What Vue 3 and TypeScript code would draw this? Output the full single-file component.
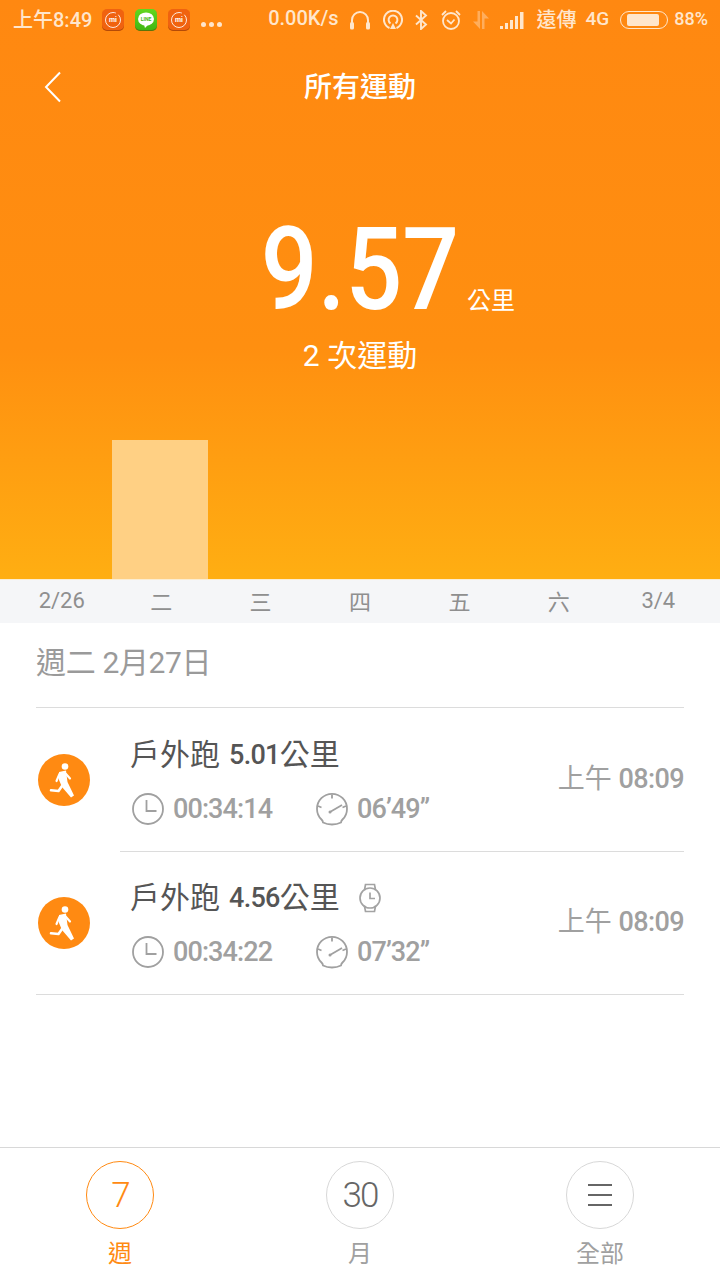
<script setup lang="ts">
import { ref } from "vue"

interface Workout {
  id: number
  name: string
  distance: string
  duration: string
  pace: string
  time: string
  fromWatch: boolean
}

const weekLabels = ["2/26", "二", "三", "四", "五", "六", "3/4"]
const barHeights = [0, 139, 0, 0, 0, 0, 0]

const workouts: Workout[] = [
  { id: 1, name: "戶外跑", distance: "5.01", duration: "00:34:14", pace: "06’49”", time: "08:09", fromWatch: false },
  { id: 2, name: "戶外跑", distance: "4.56", duration: "00:34:22", pace: "07’32”", time: "08:09", fromWatch: true },
]

const tabs = [
  { key: "week", label: "週", glyph: "7" },
  { key: "month", label: "月", glyph: "30" },
  { key: "all", label: "全部", glyph: "" },
]
const activeTab = ref("week")
</script>

<template>
  <div class="page">
    <section class="hero">
      <div class="status">
        <div class="status-left">
          <span class="clock-text">上午8:49</span>
          <span class="app-icon mi">
            <svg viewBox="0 0 22 22" width="22" height="22">
              <circle cx="11" cy="11" r="7.5" fill="none" stroke="#fff" stroke-width="1" stroke-dasharray="38 3 6 3" opacity=".85" />
            </svg>
            <b>mi</b>
          </span>
          <span class="app-icon line">
            <svg viewBox="0 0 22 22" width="22" height="22">
              <ellipse cx="11" cy="10" rx="8" ry="6.6" fill="#fff" />
              <path d="M9 15.5l1 3.4 3.4-3.4z" fill="#fff" />
            </svg>
            <b>LINE</b>
          </span>
          <span class="app-icon mi">
            <svg viewBox="0 0 22 22" width="22" height="22">
              <circle cx="11" cy="11" r="7.5" fill="none" stroke="#fff" stroke-width="1" stroke-dasharray="38 3 6 3" opacity=".85" />
            </svg>
            <b>mi</b>
          </span>
          <span class="more-dots"><i></i><i></i><i></i></span>
        </div>
        <div class="status-right">
          <span class="speed">0.00K/s</span>
          <!-- headset -->
          <svg class="s-icon headset" viewBox="0 0 22 20" width="22" height="20" fill="none" stroke="#ffe6cc" stroke-width="2">
            <path d="M3 15V10a8 8 0 0 1 16 0v5" />
            <rect x="1" y="12" width="4" height="7.500" rx="1.600" fill="#ffe6cc" stroke="none" />
            <rect x="17" y="12" width="4" height="7.500" rx="1.600" fill="#ffe6cc" stroke="none" />
          </svg>
          <!-- cast target -->
          <svg class="s-icon" viewBox="0 0 20 20" width="20" height="20" fill="none" stroke="#ffe6cc" stroke-width="2">
            <path d="M6.5 18A9 9 0 1 1 13.5 18" />
            <path d="M7.5 13.5a4.4 4.4 0 1 1 5 0" />
            <path d="M10 13l3 6H7z" fill="#ffe6cc" stroke="none" />
          </svg>
          <!-- bluetooth -->
          <svg class="s-icon" viewBox="0 0 14 20" width="14" height="20" fill="none" stroke="#ffe6cc" stroke-width="1.9">
            <path d="M2 5.5l10 9L7 19V1l5 4.5-10 9" />
          </svg>
          <!-- alarm -->
          <svg class="s-icon alarm" viewBox="0 0 22 22" width="22" height="22" fill="none" stroke="#ffe6cc" stroke-width="1.8">
            <circle cx="11" cy="12" r="8" />
            <path d="M7 11l4 3.5 3.5-4" />
            <path d="M2 6l4-4M20 6l-4-4" />
          </svg>
          <!-- mobile data arrows, idle -->
          <svg class="s-icon arrows" viewBox="0 0 18 20" width="18" height="20" fill="#ffe6cc" opacity=".4">
            <path d="M5.500 1h2.500v18L1 11.500h4.500zM10 1l7 7.500h-4.500V19H10z" />
          </svg>
          <!-- signal bars -->
          <svg class="s-icon signal" viewBox="0 0 24 18" width="24" height="18" fill="#ffe6cc">
            <rect x="0" y="15" width="3" height="3" /><rect x="5" y="12" width="3" height="6" />
            <rect x="10" y="9" width="3" height="9" /><rect x="15" y="5" width="3" height="13" />
            <rect x="20" y="1" width="3.500" height="17" />
          </svg>
          <span class="carrier">遠傳</span>
          <span class="net">4G</span>
          <span class="battery"><i></i></span>
          <span class="percent">88%</span>
        </div>
      </div>

      <header class="nav">
        <svg class="back" viewBox="0 0 18 32" width="18" height="32" fill="none" stroke="#fff" stroke-width="2">
          <path d="M16 1.500L2 16l14 14.500" />
        </svg>
        <h1>所有運動</h1>
      </header>

      <div class="summary">
        <div class="total">
          <span class="value">9.57</span>
          <span class="unit">公里</span>
        </div>
        <div class="count">2 次運動</div>
      </div>

      <div class="chart">
        <div v-for="(h, i) in barHeights" :key="i" class="slot">
          <div v-if="h" class="bar" :style="{ height: h + 'px' }"></div>
        </div>
      </div>
    </section>

    <div class="axis">
      <span v-for="label in weekLabels" :key="label">{{ label }}</span>
    </div>

    <main class="list">
      <h2 class="day">週二 2月27日</h2>
      <article v-for="(w, i) in workouts" :key="w.id" class="row" :class="{ last: i === workouts.length - 1 }">
        <div class="badge">
          <svg viewBox="0 0 52 52" width="52" height="52">
            <circle cx="27" cy="12.500" r="3.300" fill="#fff" />
            <path d="M21 18l7-1.500 1.500 11.500 6.500 13.500-3 2-9-10.500-3-7z" fill="#fff" />
            <path d="M24 32l-3.500 5-7.500-.7" fill="none" stroke="#fff" stroke-width="2.600" stroke-linecap="round" stroke-linejoin="round" />
            <path d="M21.500 20l-3 7M28 20l4 4.500" fill="none" stroke="#fff" stroke-width="2.200" stroke-linecap="round" />
          </svg>
        </div>
        <div class="info">
          <div class="title">
            <span>{{ w.name }}</span>
            <b>{{ w.distance }}</b><span class="km">公里</span>
            <svg v-if="w.fromWatch" class="watch" viewBox="0 0 26 30" width="26" height="30" fill="none" stroke="#a3a3a3" stroke-width="1.700">
              <circle cx="13" cy="15" r="10" />
              <path d="M7.500 7l1-5.500h9l1 5.500M7.500 23l1 5.500h9l1-5.500" />
              <path d="M13 9.500V15.500h5" />
            </svg>
          </div>
          <div class="metrics">
            <span class="metric duration">
              <svg viewBox="0 0 34 34" width="34" height="34" fill="none" stroke="#a0a0a0" stroke-width="1.800">
                <circle cx="17" cy="17" r="15" />
                <path d="M15.500 8v11h10" />
              </svg>
              {{ w.duration }}
            </span>
            <span class="metric">
              <svg viewBox="0 0 34 34" width="34" height="34" fill="none" stroke="#a0a0a0" stroke-width="1.800">
                <path d="M6.500 27.500A15 15 0 1 1 27.500 27.500Q26 29 26 30.500Q22 32.500 17 32.500Q12 32.500 8 30.500Q8 29 6.500 27.500z" />
                <path d="M17 2.500v4M3 14l3.500 1.500M31 14l-3.500 1.500" />
                <path d="M15 20l12-7" />
                <circle cx="15" cy="20" r="1.500" fill="#a0a0a0" stroke="none" />
              </svg>
              {{ w.pace }}
            </span>
          </div>
        </div>
        <div class="when"><span>上午</span> <b>{{ w.time }}</b></div>
      </article>
    </main>

    <nav class="tabs">
      <button v-for="t in tabs" :key="t.key" class="tab" :class="{ on: activeTab === t.key }" @click="activeTab = t.key">
        <span class="ring">
          <template v-if="t.glyph">{{ t.glyph }}</template>
          <span v-else class="menu"><i></i><i></i><i></i></span>
        </span>
        <span class="tab-label">{{ t.label }}</span>
      </button>
    </nav>
  </div>
</template>

<style>
html,
body {
  margin: 0;
  background: #fff;
}
</style>

<style scoped>
.page {
  width: 720px;
  height: 1280px;
  display: flex;
  flex-direction: column;
  overflow: hidden;
  background: #fff;
  font-family: Roboto, "Noto Sans CJK TC", sans-serif;
}

.hero {
  height: 579px;
  flex: none;
  display: flex;
  flex-direction: column;
  background: linear-gradient(180deg, #ff8811 0%, #ff8f10 60%, #ffae12 100%);
  color: #fff;
}

.status {
  height: 40px;
  flex: none;
  display: flex;
  justify-content: space-between;
  align-items: center;
  padding: 0 12px 0 13px;
  color: #ffe6cc;
  font-size: 20px;
  font-weight: 500;
}

.status-left,
.status-right {
  display: flex;
  align-items: center;
}

.status-left {
  gap: 11px;
}

.status-right {
  gap: 11px;
}

.clock-text,
.speed,
.carrier,
.net,
.percent {
  padding-bottom: 4px;
}

.clock-text {
  width: 78px;
  white-space: nowrap;
}

.app-icon {
  position: relative;
  width: 22px;
  height: 22px;
  border-radius: 5px;
  box-shadow: inset 0 -1px 0 rgba(120, 50, 0, 0.5);
  display: block;
}

.app-icon svg {
  display: block;
}

.app-icon b {
  position: absolute;
  inset: 0;
  display: flex;
  align-items: center;
  justify-content: center;
  font-size: 7px;
  line-height: 1;
}

.app-icon.mi {
  background: #f0620f;
}

.app-icon.mi b {
  color: #fff;
}

.app-icon.line {
  background: linear-gradient(#62d71e, #3fb512);
}

.app-icon.line b {
  color: #3fb512;
  font-size: 5px;
  padding-bottom: 2px;
}

.more-dots {
  display: flex;
  gap: 3px;
  padding-top: 9px;
}

.more-dots i {
  width: 5px;
  height: 5px;
  border-radius: 50%;
  background: #ffe6cc;
}

.speed {
  margin-right: -1px;
}

.s-icon {
  display: block;
  flex: none;
}

.headset {
  margin-right: 1px;
}

.alarm {
  margin-left: 1px;
}

.arrows {
  margin-left: -1px;
}

.signal {
  margin-left: -1px;
}

.carrier {
  margin-left: 2px;
}

.net {
  font-size: 19px;
  margin-left: -2px;
}

.battery {
  width: 48px;
  height: 18px;
  box-sizing: border-box;
  border: 1.500px solid #ffe6cc;
  border-radius: 9px;
  padding: 2px 4px 2px 6px;
  display: block;
}

.battery i {
  display: block;
  height: 100%;
  width: 88%;
  background: #ffe6cc;
  border-radius: 2px;
}

.percent {
  font-size: 18px;
  margin-left: -5px;
}

.nav {
  position: relative;
  height: 94px;
  flex: none;
  display: flex;
  align-items: center;
  justify-content: center;
}

.nav h1 {
  margin: 0;
  font-size: 28px;
  font-weight: 500;
  line-height: 1;
  padding-top: 2px;
}

.back {
  position: absolute;
  left: 44px;
  top: 31px;
}

.summary {
  display: flex;
  flex-direction: column;
  align-items: center;
  padding-top: 76px;
}

.total {
  position: relative;
  height: 120px;
  display: flex;
  justify-content: center;
}

.value {
  font-size: 115px;
  line-height: 120px;
  font-weight: 500;
  transform: scaleX(0.87);
}

.unit {
  position: absolute;
  left: calc(100% - 7px);
  bottom: 17px;
  font-size: 24px;
  line-height: 1;
  white-space: nowrap;
}

.count {
  margin-top: 8px;
  font-size: 30px;
  line-height: 36px;
  font-weight: 400;
}

.chart {
  margin-top: auto;
  height: 139px;
  padding: 0 13px 0 11px;
  display: grid;
  grid-template-columns: repeat(7, 1fr);
  justify-items: center;
  align-items: end;
}

.slot {
  width: 96px;
  height: 100%;
  display: flex;
  align-items: flex-end;
}

.bar {
  width: 100%;
  background: #ffd084;
}

.axis {
  height: 44px;
  flex: none;
  box-sizing: border-box;
  border-top: 1px solid #fbedd2;
  padding: 0 12px 3px;
  display: grid;
  grid-template-columns: repeat(7, 1fr);
  align-items: center;
  justify-items: center;
  background: #f5f6f8;
  color: #8f8f8f;
  font-size: 22px;
}

.list {
  flex: 1;
  padding: 0 36px;
}

.day {
  height: 85px;
  margin: 0;
  box-sizing: border-box;
  padding-top: 18px;
  font-size: 30px;
  letter-spacing: -0.35px;
  line-height: 44px;
  font-weight: 400;
  color: #9a9a9a;
  border-bottom: 1px solid #dcdcdc;
}

.row {
  position: relative;
  height: 144px;
  box-sizing: border-box;
  display: flex;
  align-items: center;
  border-bottom: 1px solid #dcdcdc;
}

.row.last {
  height: 143px;
}

.row:not(.last) {
  border-bottom: none;
}

.row:not(.last)::after {
  content: "";
  position: absolute;
  left: 84px;
  right: 0;
  bottom: 0;
  height: 1px;
  background: #dcdcdc;
}

.badge {
  width: 52px;
  height: 52px;
  margin: 0 0 0 2px;
  border-radius: 50%;
  background: #ff8a12;
  flex: none;
}

.badge svg {
  display: block;
}

.info {
  margin-left: 40px;
  flex: 1;
  display: flex;
  flex-direction: column;
  gap: 16px;
}

.title {
  display: flex;
  align-items: center;
  height: 42px;
  font-size: 30px;
  line-height: 42px;
  color: #555;
}

.title b {
  margin-left: 9px;
  font-size: 27px;
  letter-spacing: -0.7px;
  font-weight: 500;
}

.watch {
  margin-left: 17px;
}

.metrics {
  display: flex;
  align-items: center;
  padding-left: 1px;
  font-size: 27px;
  letter-spacing: -0.9px;
  font-weight: 500;
  color: #a0a0a0;
  height: 34px;
}

.metric {
  display: flex;
  align-items: center;
  gap: 8px;
  white-space: nowrap;
}

.metric svg {
  display: block;
}

.duration {
  width: 184px;
}

.when {
  align-self: center;
  margin-top: -8px;
  font-size: 27px;
  color: #a0a0a0;
  white-space: nowrap;
}

.when b {
  font-weight: 500;
  letter-spacing: -0.6px;
}

.tabs {
  height: 133px;
  box-sizing: border-box;
  flex: none;
  border-top: 1px solid #d8d8d8;
  display: grid;
  grid-template-columns: repeat(3, 240px);
}

.tab {
  border: 0;
  background: none;
  padding: 13px 0 0;
  font: inherit;
  display: flex;
  flex-direction: column;
  align-items: center;
  color: #a0a0a0;
}

.ring {
  width: 68px;
  height: 68px;
  box-sizing: border-box;
  border: 1px solid #d8d8d8;
  border-radius: 50%;
  display: flex;
  align-items: center;
  justify-content: center;
  font-size: 35px;
  letter-spacing: -2px;
  font-weight: 300;
  color: #666;
}

.tab-label {
  margin-top: 7px;
  font-size: 24px;
  line-height: 36px;
}

.tab.on {
  color: #ff8a12;
}

.tab.on .ring {
  border-color: #ff8a12;
  color: #ff8a12;
}

.menu {
  display: flex;
  flex-direction: column;
  gap: 8px;
}

.menu i {
  display: block;
  width: 24px;
  height: 2px;
  background: #666;
}
</style>
